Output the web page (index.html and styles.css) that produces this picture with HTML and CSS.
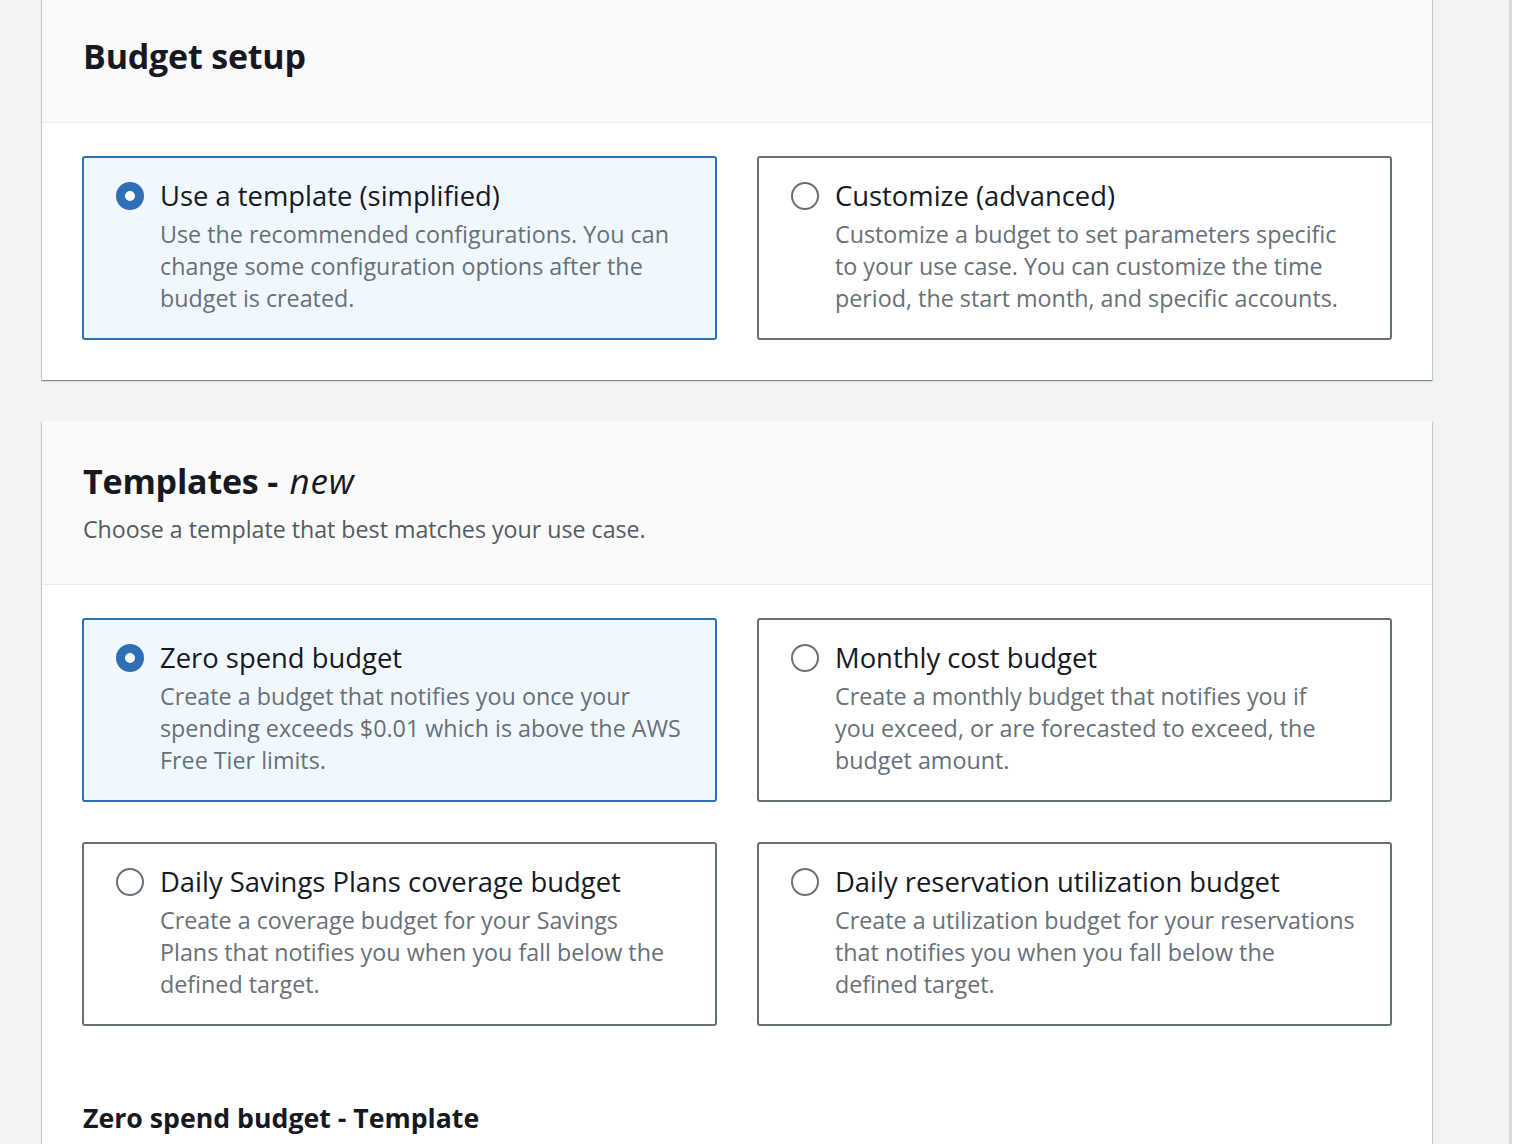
FILE: index.html
```html
<!DOCTYPE html>
<html lang="en">
<head>
<meta charset="utf-8">
<title>Budget setup</title>
<link rel="stylesheet" href="styles.css">
</head>
<body>
<div class="layout">
  <main class="content">
    <section class="card card-first">
      <header class="card-header header-plain">
        <h2 class="card-title">Budget setup</h2>
      </header>
      <div class="card-body">
        <div class="tiles">
          <label class="tile selected">
            <span class="radio on"></span>
            <span class="tile-text">
              <span class="tile-title">Use a template (simplified)</span>
              <span class="tile-desc">Use the recommended configurations. You can<br>change some configuration options after the<br>budget is created.</span>
            </span>
          </label>
          <label class="tile">
            <span class="radio"></span>
            <span class="tile-text">
              <span class="tile-title">Customize (advanced)</span>
              <span class="tile-desc">Customize a budget to set parameters specific<br>to your use case. You can customize the time<br>period, the start month, and specific accounts.</span>
            </span>
          </label>
        </div>
      </div>
    </section>

    <section class="card">
      <header class="card-header">
        <h2 class="card-title">Templates - <em>new</em></h2>
        <p class="card-sub">Choose a template that best matches your use case.</p>
      </header>
      <div class="card-body">
        <div class="tiles">
          <label class="tile selected">
            <span class="radio on"></span>
            <span class="tile-text">
              <span class="tile-title">Zero spend budget</span>
              <span class="tile-desc">Create a budget that notifies you once your<br>spending exceeds $0.01 which is above the AWS<br>Free Tier limits.</span>
            </span>
          </label>
          <label class="tile">
            <span class="radio"></span>
            <span class="tile-text">
              <span class="tile-title">Monthly cost budget</span>
              <span class="tile-desc">Create a monthly budget that notifies you if<br>you exceed, or are forecasted to exceed, the<br>budget amount.</span>
            </span>
          </label>
          <label class="tile">
            <span class="radio"></span>
            <span class="tile-text">
              <span class="tile-title">Daily Savings Plans coverage budget</span>
              <span class="tile-desc">Create a coverage budget for your Savings<br>Plans that notifies you when you fall below the<br>defined target.</span>
            </span>
          </label>
          <label class="tile">
            <span class="radio"></span>
            <span class="tile-text">
              <span class="tile-title">Daily reservation utilization budget</span>
              <span class="tile-desc">Create a utilization budget for your reservations<br>that notifies you when you fall below the<br>defined target.</span>
            </span>
          </label>
        </div>
        <h3 class="section-title">Zero spend budget - Template</h3>
      </div>
    </section>
  </main>
  <aside class="side"></aside>
</div>
</body>
</html>
```

FILE: styles.css
```css
* { box-sizing: border-box; }

html, body {
  margin: 0;
  padding: 0;
  height: 100%;
  overflow: hidden;
}

body {
  background: #f2f3f3;
  font-family: "Open Sans", "Noto Sans", Arial, sans-serif;
  color: #16191f;
}

.layout {
  display: flex;
  height: 1144px;
}

.content {
  width: 1509px;
  padding: 0 77px 0 42px;
  display: flex;
  flex-direction: column;
  gap: 41px;
}

.side {
  flex: 1;
  background: #ffffff;
  border-left: 3px solid #d5dbdb;
}

.card {
  background: #ffffff;
  box-shadow: 0 1px 1px 0 rgba(0, 28, 36, 0.3), 1px 1px 1px 0 rgba(0, 28, 36, 0.15), -1px 1px 1px 0 rgba(0, 28, 36, 0.15);
}

.card-first {
  margin-top: -4px;
}

.card-header {
  background: #fafafa;
  border-bottom: 1px solid #eaeded;
  padding: 38px 40px 39px 41px;
}

.header-plain {
  padding-bottom: 44px;
}

.card-title {
  margin: 0;
  font-size: 34px;
  line-height: 44px;
  font-weight: 700;
  color: #16191f;
  letter-spacing: -0.2px;
}

.card-title em {
  font-weight: 400;
  font-style: italic;
  font-size: 35px;
  letter-spacing: 0.8px;
  margin-left: 3px;
}

.card-sub {
  margin: 10px 0 0 0;
  font-size: 23.2px;
  line-height: 32px;
  color: #545b64;
}

.card-body {
  padding: 33px 40px 40px 40px;
}

.tiles {
  display: grid;
  grid-template-columns: 1fr 1fr;
  column-gap: 40px;
  row-gap: 40px;
}

.tile {
  display: flex;
  gap: 16px;
  border: 2px solid #687078;
  border-radius: 3px;
  padding: 20px 16px 24px 32px;
  background: #ffffff;
}

.tile.selected {
  border-color: #2f6fb6;
  background: #f1f8fd;
}

.radio {
  flex: none;
  width: 28px;
  height: 28px;
  margin-top: 4px;
  border-radius: 50%;
  border: 2.5px solid #687078;
  background: #ffffff;
}

.radio.on {
  border: 9px solid #2f6fb6;
}

.tile-text {
  display: flex;
  flex-direction: column;
}

.tile-title {
  font-size: 27.4px;
  line-height: 36px;
  font-weight: 500;
  color: #16191f;
  margin-bottom: 4px;
}

.tile-desc {
  font-size: 23.3px;
  line-height: 32px;
  color: #687078;
}

.section-title {
  margin: 74px 0 0 1px;
  font-size: 26.7px;
  line-height: 36px;
  font-weight: 700;
  color: #16191f;
}
```
